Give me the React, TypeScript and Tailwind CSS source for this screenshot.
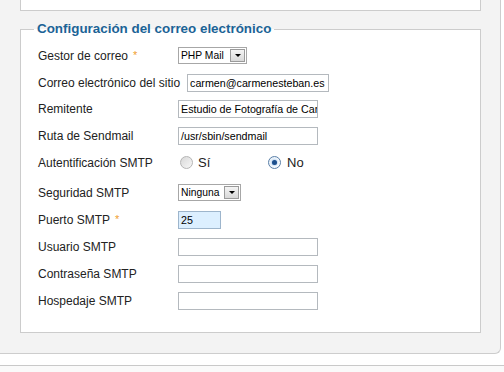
/**
 * Mail settings panel
 * Joomla-style fieldset with SMTP configuration fields
 */

const font = "font-['Liberation_Sans',Arial,sans-serif]";

function Req() {
  return <span className="ml-[5px] align-top text-[11px] text-[#f0a030]">*</span>;
}

function Label({ children, wide }: { children: React.ReactNode; wide?: boolean }) {
  return (
    <div
      className={`${wide ? "mr-[7px]" : "w-[140px]"} shrink-0 whitespace-nowrap text-[12px] text-[#222]`}
    >
      {children}
    </div>
  );
}

function TextBox({ value = "", w = "w-[140px]", blue }: { value?: string; w?: string; blue?: boolean }) {
  return (
    <div
      className={`${w} h-[18px] overflow-hidden whitespace-nowrap border px-[2px] text-[10.7px] leading-[16px] text-black ${
        blue ? "border-[#9db5cc] bg-[#dcefff]" : "border-[#b4b9be] bg-white"
      }`}
    >
      {value}
    </div>
  );
}

function Select({ value, w }: { value: string; w: string }) {
  return (
    <div className={`${w} flex h-[17px] items-center border border-[#a7a7a7] bg-white pl-[2px] text-[10.3px] text-black`}>
      <span className="flex-1 overflow-hidden whitespace-nowrap">{value}</span>
      <span className="ml-[2px] mr-[1px] flex h-[13px] w-[15px] shrink-0 items-center justify-center border border-[#9a9a9a] bg-gradient-to-b from-[#f4f4f4] to-[#d8d8d8]">
        <span className="h-0 w-0 border-x-[3px] border-t-[3px] border-x-transparent border-t-black" />
      </span>
    </div>
  );
}

function Radio({ checked }: { checked?: boolean }) {
  return (
    <span
      className={`flex h-[13px] w-[13px] items-center justify-center rounded-full border bg-gradient-to-br ${
        checked ? "border-[#5a7fa8] from-[#e4eef8] to-[#ffffff]" : "border-[#b5b5b5] from-[#d8d8d8] to-[#f8f8f8]"
      }`}
    >
      {checked && <span className="h-[5px] w-[5px] rounded-full bg-[#1d4f8c] shadow-[0_0_2px_#5d9be0]" />}
    </span>
  );
}

function Row({ children, h = "h-[27px]" }: { children: React.ReactNode; h?: string }) {
  return <div className={`flex ${h} items-center`}>{children}</div>;
}

export default function App() {
  return (
    <div className={`${font} h-[372px] w-[504px] overflow-hidden bg-white`}>
      {/* Gray panel */}
      <div className="w-[501px] rounded-br-[6px] border-r border-b border-[#cdcdcd] bg-[#f3f3f3] pl-[20px] pr-[19px] pb-[20px]">
        {/* Previous fieldset (clipped) */}
        <div className="h-[11px] border-x border-b border-[#cccccc] bg-white" />

        <fieldset className="mt-[9px] border border-[#cccccc] bg-white pl-[17px] pb-[18px]">
          <legend className="ml-[-4px] px-[3px] text-[13.4px] leading-[18px] font-bold text-[#1b6396]">
            Configuración del correo electrónico
          </legend>

          <div className="pt-[4px]">
            <Row>
              <Label>
                Gestor de correo
                <Req />
              </Label>
              <Select value="PHP Mail" w="w-[69px]" />
            </Row>
            <Row>
              <Label wide>Correo electrónico del sitio</Label>
              <TextBox value="carmen@carmenesteban.es" w="w-[142px]" />
            </Row>
            <Row h="h-[26px]">
              <Label>Remitente</Label>
              <TextBox value="Estudio de Fotografía de Carmen" />
            </Row>
            <Row>
              <Label>Ruta de Sendmail</Label>
              <TextBox value="/usr/sbin/sendmail" />
            </Row>
            <Row>
              <Label>Autentificación SMTP</Label>
              <div className="flex items-center text-[13px] text-[#222]">
                <span className="ml-[2px]">
                  <Radio />
                </span>
                <span className="ml-[5px] w-[70px]">Sí</span>
                <Radio checked />
                <span className="ml-[6px]">No</span>
              </div>
            </Row>
            <div className="mt-[3px]">
              <Row>
                <Label>Seguridad SMTP</Label>
                <Select value="Ninguna" w="w-[63px]" />
              </Row>
              <Row>
                <Label>
                  Puerto SMTP
                  <Req />
                </Label>
                <TextBox value="25" w="w-[43px]" blue />
              </Row>
              <Row>
                <Label>Usuario SMTP</Label>
                <TextBox />
              </Row>
              <Row>
                <Label>Contraseña SMTP</Label>
                <TextBox />
              </Row>
              <Row>
                <Label>Hospedaje SMTP</Label>
                <TextBox />
              </Row>
            </div>
          </div>
        </fieldset>
      </div>

      {/* Footer rule */}
      <div className="mt-[11px] h-full border-t border-[#c9c9c9] bg-[#fafafa]" />
    </div>
  );
}
